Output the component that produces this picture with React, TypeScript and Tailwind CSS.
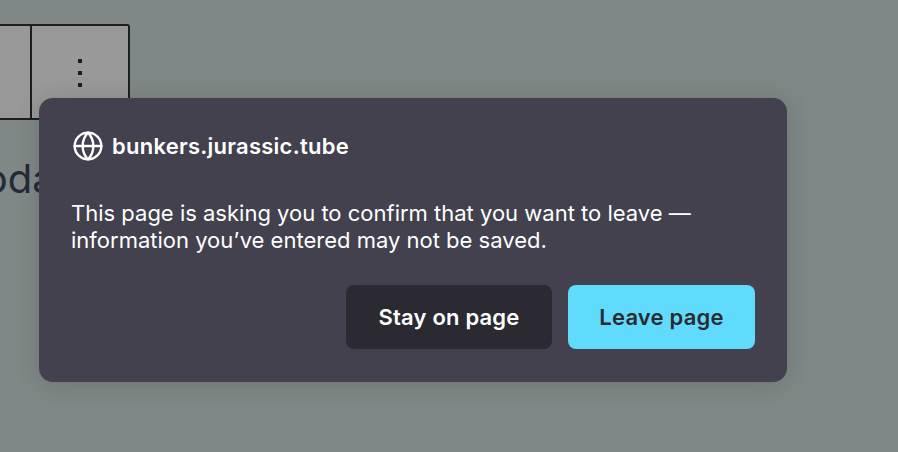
import { Globe } from "lucide-react";

export default function App() {
  return (
    <div className="relative h-[452px] w-[898px] overflow-hidden bg-[#7f8886] font-['Inter',sans-serif]">
      <div className="pt-6">
        <div className="flex h-24 w-[130px] rounded-tr-[3px] rounded-br-[3px] border-2 border-l-0 border-[#1e1e1e] bg-[#999999]">
          <div className="w-[32px] border-r-2 border-[#1e1e1e]" />
          <div className="flex flex-1 flex-col items-center gap-2 pt-[33px]">
            <span className="h-1 w-1 bg-[#1e1e1e]" />
            <span className="h-1 w-1 bg-[#1e1e1e]" />
            <span className="h-1 w-1 bg-[#1e1e1e]" />
          </div>
        </div>
        <p className="ml-[-39px] mt-[37px] text-[40px] leading-[44px] text-[#262a38]">Today</p>
      </div>

      <div className="absolute left-[39px] top-[98px] h-[284px] w-[748px] rounded-[14px] bg-[#42414d] px-8 pt-8 shadow-[0_2px_24px_rgba(0,0,0,0.15)]">
        <div className="flex h-8 items-center gap-2 text-white">
          <Globe size={32} strokeWidth={1.8} className="ml-px" />
          <span className="text-[22px] font-semibold tracking-[0.25px]">bunkers.jurassic.tube</span>
        </div>
        <p className="mt-[38px] text-[22px] leading-[27px] text-white">
          This page is asking you to confirm that you want to leave —<br />
          information you’ve entered may not be saved.
        </p>
        <div className="mt-[31px] flex justify-end gap-4">
          <button className="h-16 w-[206px] rounded-lg bg-[#2b2a33] pt-px text-[22px] font-semibold tracking-[0.2px] text-white">
            Stay on page
          </button>
          <button className="h-16 w-[187px] rounded-lg bg-[#60dbfc] pt-px text-[22px] font-semibold tracking-[0.2px] text-[#2b2a33]">
            Leave page
          </button>
        </div>
      </div>
    </div>
  );
}
